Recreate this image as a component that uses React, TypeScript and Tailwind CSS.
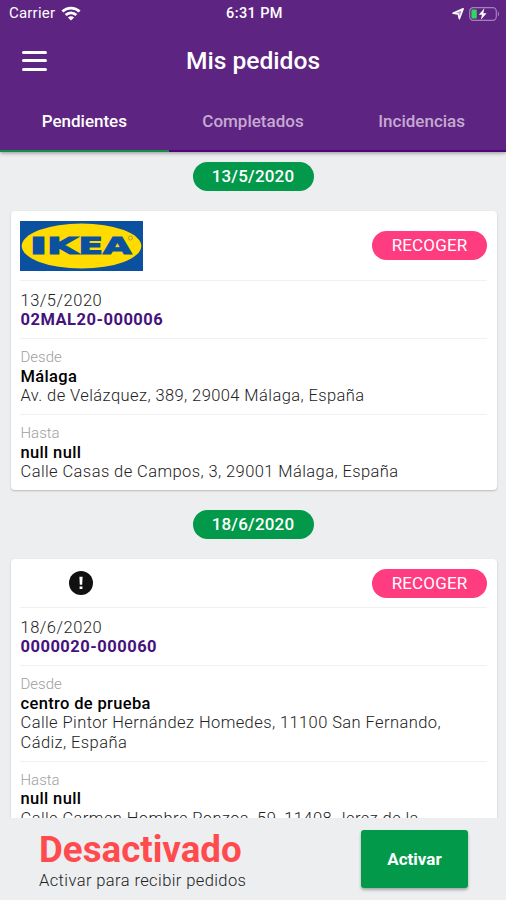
import clsx from 'clsx';

type Stop = {
  label: string;
  name: string;
  address: string;
};

type Order = {
  id: string;
  date: string;
  logo?: 'ikea';
  status: string;
  stops: Stop[];
};

const tabs = ['Pendientes', 'Completados', 'Incidencias'];

const orders: Order[] = [
  {
    id: '02MAL20-000006',
    date: '13/5/2020',
    logo: 'ikea',
    status: 'RECOGER',
    stops: [
      { label: 'Desde', name: 'Málaga', address: 'Av. de Velázquez, 389, 29004 Málaga, España' },
      { label: 'Hasta', name: 'null null', address: 'Calle Casas de Campos, 3, 29001 Málaga, España' }
    ]
  },
  {
    id: '0000020-000060',
    date: '18/6/2020',
    status: 'RECOGER',
    stops: [
      {
        label: 'Desde',
        name: 'centro de prueba',
        address: 'Calle Pintor Hernández Homedes, 11100 San Fernando, Cádiz, España'
      },
      {
        label: 'Hasta',
        name: 'null null',
        address: 'Calle Carmen Hombre Ponzoa, 59, 11408 Jerez de la'
      }
    ]
  }
];

const WifiIcon = () => (
  <svg width="20" height="15" viewBox="0 0 20 15" fill="none" stroke="#fff" strokeWidth="2.8">
    <path d="M1.4 5.6C6.2 0.9 13.8 0.9 18.6 5.6" />
    <path d="M4.7 9C7.7 6.1 12.3 6.1 15.3 9" />
    <path d="M10 14.6L6.9 11.4C8.7 9.8 11.3 9.8 13.1 11.4Z" fill="#fff" stroke="none" />
  </svg>
);

const LocationIcon = () => (
  <svg width="12" height="12" viewBox="0 0 12 12">
    <path d="M11.2 0.8L7.4 10.8L6.2 5.9L1 5.2Z" fill="#fff" fillOpacity="0.55" stroke="#fff" strokeWidth="1.5" strokeLinejoin="round" />
  </svg>
);

const BatteryIcon = () => (
  <svg width="31" height="14" viewBox="0 0 31 14">
    <rect x="0.7" y="0.7" width="26.6" height="12.6" rx="3.6" fill="none" stroke="#a182bd" strokeWidth="1.2" />
    <path d="M28.9 4.6C30.5 5.4 30.5 8.6 28.9 9.4Z" fill="#a182bd" />
    <rect x="2.4" y="2.4" width="5.4" height="9.2" rx="1.4" fill="#33d65c" />
    <path d="M15.4 1.2L9.8 7.8H13L11.8 12.8L17.6 6.2H14.3Z" fill="#fff" />
  </svg>
);

const IkeaLogo = () => (
  <svg width="123" height="50" viewBox="0 0 123 50">
    <rect width="123" height="50" fill="#0b51a0" />
    <ellipse cx="61.5" cy="25" rx="59.8" ry="22.5" fill="#ffdb00" />
    <g fill="#0b51a0" stroke="#0b51a0" strokeWidth="1.2" fontFamily="DejaVu Sans" fontWeight="bold" fontSize="23.5">
      <text x="9.5" y="33.2" textLength="18" lengthAdjust="spacingAndGlyphs">I</text>
      <text x="27" y="33.2" textLength="31" lengthAdjust="spacingAndGlyphs">K</text>
      <text x="58.5" y="33.2" textLength="24.5" lengthAdjust="spacingAndGlyphs">E</text>
      <text x="83" y="33.2" textLength="28.5" lengthAdjust="spacingAndGlyphs">A</text>
    </g>
    <circle cx="110.5" cy="17" r="2" fill="none" stroke="#8a8a3c" strokeWidth="0.7" />
  </svg>
);

const AlertIcon = () => (
  <svg width="24" height="24" viewBox="0 0 24 24">
    <circle cx="12" cy="12" r="12" fill="#111" />
    <path d="M10.4 5.8H13.6L13.2 13.8H10.8Z" fill="#fff" />
    <rect x="10.6" y="15.4" width="2.8" height="2.6" fill="#fff" />
  </svg>
);

const DateBadge = ({ date }: { date: string }) => (
  <div className="mx-auto flex h-[29px] w-[121px] items-center justify-center rounded-full bg-[#02994a] pt-px text-[17px] font-medium tracking-[0.2px] text-white">
    {date}
  </div>
);

const OrderCard = ({ order }: { order: Order }) => (
  <article className="mr-[9px] ml-[11px] rounded bg-white pr-2.5 pl-[9px] shadow-[0_1px_2px_rgba(0,0,0,0.22)]">
    <header className={clsx('flex items-center justify-between border-b border-[#f1f1f2]', order.logo ? 'h-[70px]' : 'h-[49px]')}>
      {order.logo ? (
        <IkeaLogo />
      ) : (
        <div className="flex w-[122px] justify-center">
          <AlertIcon />
        </div>
      )}
      <span className="flex h-[29px] w-[115px] items-center justify-center rounded-full bg-[#ff3c80] pt-px text-[17px] tracking-[0.15px] text-white">
        {order.status}
      </span>
    </header>

    <div className="h-[58px] border-b border-[#f1f1f2] pt-[9.5px] pl-[0.5px] leading-[19.5px]">
      <p className="text-[16.5px] font-light tracking-[0.5px]">{order.date}</p>
      <p className="text-[16.5px] font-bold tracking-[0.5px] text-[#45127c]">{order.id}</p>
    </div>

    {order.stops.map((stop) => (
      <div key={stop.label} className="border-b border-[#f1f1f2] pt-[9px] pb-[8.5px] pl-[0.5px] leading-[19.5px] last:border-b-0">
        <p className="text-[15px] leading-[18.5px] font-light text-[#a0a0a0]">{stop.label}</p>
        <p className="text-[16.5px] font-medium tracking-[0.35px] text-black">{stop.name}</p>
        <p className="pr-3 text-[16.5px] font-light tracking-[0.41px]">{stop.address}</p>
      </div>
    ))}
  </article>
);

export default function App() {
  return (
    <div className="flex h-[900px] w-[506px] flex-col overflow-hidden bg-[#eceef0] font-['Roboto',sans-serif] text-[#222]">
      <div className="z-10 shrink-0 bg-[#5e2482] text-white shadow-[0_1px_4px_rgba(0,0,0,0.4)]">
        <div className="grid h-[27px] grid-cols-3 items-center pr-1.5 pl-[9px]">
          <div className="flex items-center gap-1.5 text-[15px] tracking-[0.2px]">
            Carrier
            <WifiIcon />
          </div>
          <div className="text-center text-[14.5px] font-medium tracking-[0.4px]">6:31 PM</div>
          <div className="flex items-center justify-end gap-[5px]">
            <LocationIcon />
            <BatteryIcon />
          </div>
        </div>

        <div className="grid h-[67px] grid-cols-[1fr_auto_1fr] items-center px-[22px]">
          <button className="flex w-[25px] flex-col gap-[5.5px]" aria-label="Menú">
            <span className="h-[3px] w-full rounded-full bg-white" />
            <span className="h-[3px] w-full rounded-full bg-white" />
            <span className="h-[3px] w-full rounded-full bg-white" />
          </button>
          <h1 className="pt-px text-[24.6px] font-medium">Mis pedidos</h1>
        </div>

        <nav className="grid h-[58px] grid-cols-3">
          {tabs.map((tab, i) => (
            <button
              key={tab}
              className={clsx(
                'border-b-2 text-[17px] font-medium',
                i === 0 ? 'border-[#168d4b] text-white' : 'border-[#4b0876] text-[#c5aad2]'
              )}
            >
              {tab}
            </button>
          ))}
        </nav>
      </div>

      <main className="min-h-0 flex-1 overflow-hidden pt-2.5">
        {orders.map((order) => (
          <section key={order.id} className="mb-5">
            <DateBadge date={order.date} />
            <div className="h-5" />
            <OrderCard order={order} />
          </section>
        ))}
      </main>

      <footer className="flex h-[82px] shrink-0 justify-between bg-[#eceef0] pr-[38px] pl-[39px]">
        <div className="pt-[11px]">
          <h2 className="text-[36.7px] leading-[41px] font-bold text-[#ff4b4e]">Desactivado</h2>
          <p className="text-[16.5px] leading-[22px] font-light tracking-[0.4px]">Activar para recibir pedidos</p>
        </div>
        <button className="mt-3 h-[58px] w-[107px] rounded-[3px] bg-[#02994a] pt-0.5 text-[17px] font-bold text-white shadow-[0_2px_3px_rgba(0,0,0,0.3)]">
          Activar
        </button>
      </footer>
    </div>
  );
}
